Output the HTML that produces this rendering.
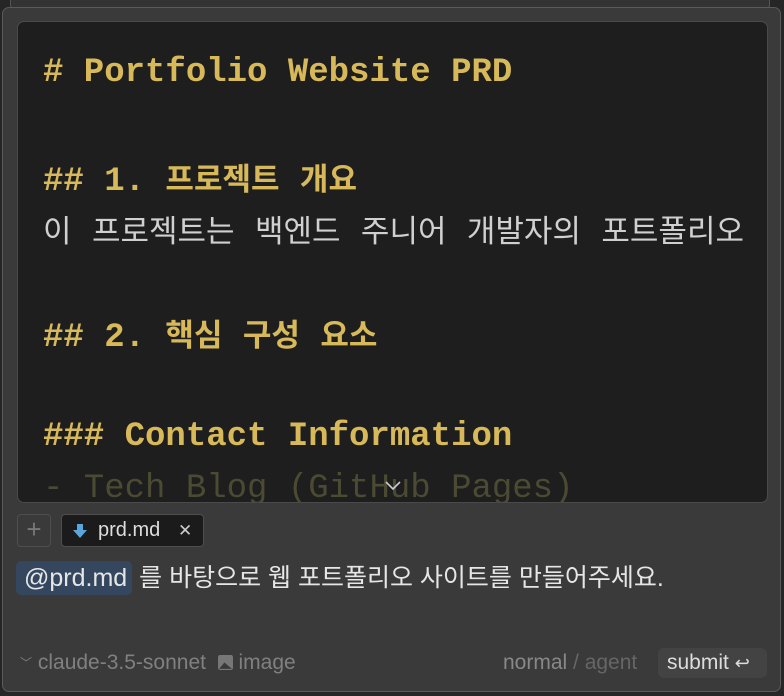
<!DOCTYPE html>
<html><head><meta charset="utf-8"><style>
html,body{margin:0;padding:0;width:784px;height:696px;overflow:hidden;background:#262626;font-family:"Liberation Sans","Noto Sans CJK KR",sans-serif}
.top{position:absolute;left:10px;top:-2px;width:758px;height:9px;border:1px solid #555;background:#333;border-radius:0 0 4px 4px}
.panel{position:absolute;left:2px;top:7px;width:777px;height:683px;background:#3a3a3a;border:1px solid #5a5a5a;border-radius:7px}
.ed{position:absolute;left:17px;top:21px;width:749px;height:480px;background:#1e1e1e;border:1px solid #4a4a4a;border-radius:7px;overflow:hidden}
.code{position:absolute;left:25px;top:25px;font-family:"Liberation Mono","Noto Sans CJK KR",monospace;font-size:34px;line-height:52px;color:#d0d0d0}
.code div{height:52px;white-space:pre}
.y{color:#d7b95a;font-weight:bold}
.k{font-family:"Noto Sans CJK KR",sans-serif;font-size:31px}
.fade{color:#4b4a32}
</style></head><body>
<div class="top"></div>
<div class="panel"></div>
<div class="ed">
<div class="code"><div class="y"># Portfolio Website PRD</div><div></div><div class="y">## 1. <span class="k">프로젝트</span> <span class="k">개요</span></div><div><span class="k">이</span> <span class="k">프로젝트는</span> <span class="k">백엔드</span> <span class="k">주니어</span> <span class="k">개발자의</span> <span class="k">포트폴리오</span></div><div></div><div class="y">## 2. <span class="k">핵심</span> <span class="k">구성</span> <span class="k">요소</span></div><div></div><div class="y">### Contact Information</div><div class="fade">- Tech Blog (GitHub Pages)</div></div>
<svg style="position:absolute;left:365px;top:458px" width="20" height="12" viewBox="0 0 20 12"><path d="M3 2 L10 9 L17 2" stroke="#ccc" stroke-width="1.6" fill="none"/></svg>
</div>
<div style="position:absolute;left:17px;top:514px;width:32px;height:31px;border:1px solid #4e4e4e;border-radius:4px;color:#777;font-size:26px;line-height:29px;text-align:center;font-weight:200">+</div>
<div style="position:absolute;left:61px;top:514px;width:141px;height:31px;background:#1b1b1b;border:1px solid #4e4e4e;border-radius:4px;color:#ddd;font-size:20px;line-height:31px">
<svg style="position:absolute;left:11px;top:9px" width="14" height="15" viewBox="0 0 14 15"><path d="M4 0h6v6h4l-7 8-7-8h4z" fill="#5aa5dc"/></svg>
<span style="position:absolute;left:36px">prd.md</span>
<span style="position:absolute;left:116px;color:#ccc;font-size:17px">✕</span>
</div>
<div style="position:absolute;left:16px;top:561px;font-size:25px;line-height:34px;color:#e6e6e6;white-space:nowrap"><span style="background:#34475f;border-radius:5px;padding:0 5px 0 8px;display:inline-block">@prd.md</span> 를 바탕으로 웹 포트폴리오 사이트를 만들어주세요.</div>
<div style="position:absolute;left:20px;top:651px;font-size:21px;line-height:24px;color:#808080;white-space:nowrap"><span style="font-size:12px;position:relative;top:-2px">﹀</span> claude-3.5-sonnet &nbsp;<svg width="15" height="15" viewBox="0 0 14 14" style="vertical-align:-1px"><rect x="0" y="0" width="14" height="14" rx="2" fill="#777"/><path d="M1 13 L6 7 L13 13z" fill="#3a3a3a"/></svg> image</div>
<div style="position:absolute;left:503px;top:651px;font-size:21px;line-height:24px;color:#888;white-space:nowrap">normal <span style="color:#666">/ agent</span></div>
<div style="position:absolute;left:658px;top:648px;width:109px;height:30px;background:#434343;border-radius:6px;font-size:21px;line-height:30px;color:#ddd;padding-left:9px;box-sizing:border-box;white-space:nowrap">submit <span style="font-size:18px">↩</span></div>
</body></html>
